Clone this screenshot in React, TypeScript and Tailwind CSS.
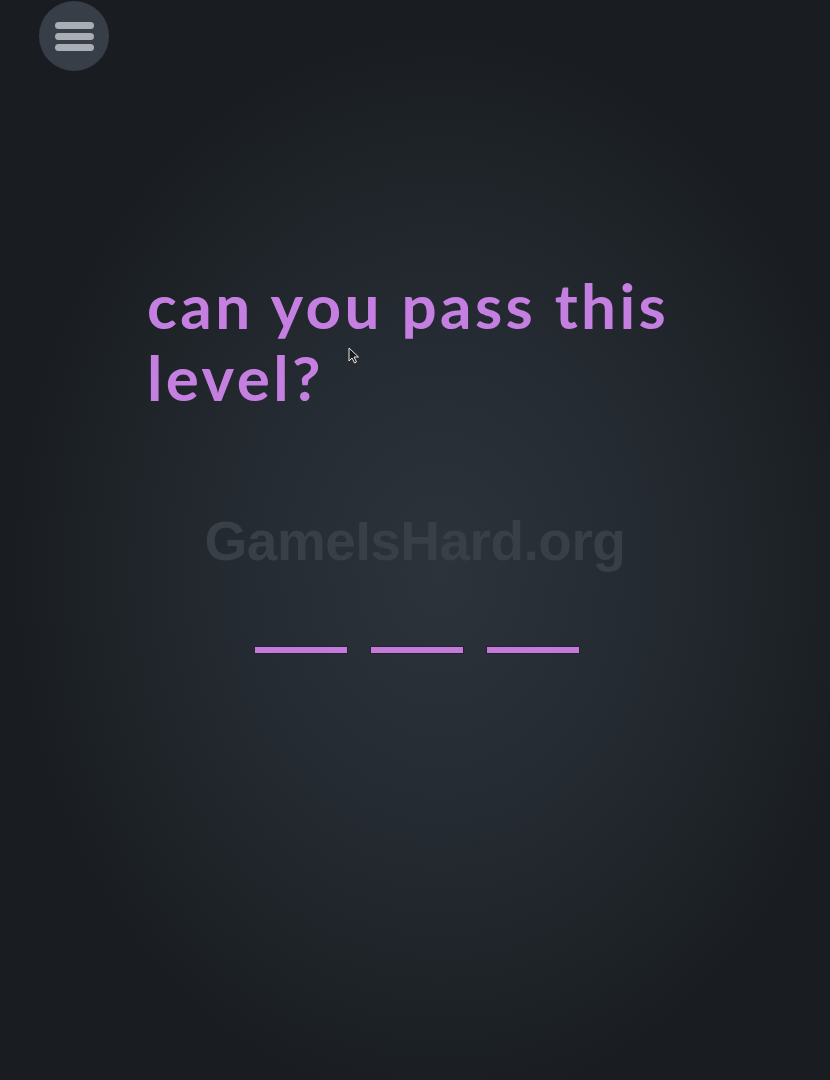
export default function App() {
  return (
    <div
      className="relative w-[830px] h-[1080px] overflow-hidden bg-[#1a1e22]"
      style={{
        backgroundImage:
          "radial-gradient(ellipse 430px 540px at 440px 570px, #2c333b 0%, #252b32 45%, #1e2328 78%, #191d21 100%)",
      }}
    >
      <div className="flex flex-col h-full">
        <div className="pl-[39px] pt-[1px]">
          <button className="w-[70px] h-[70px] rounded-full bg-[#383e47] flex flex-col items-center justify-center gap-[4px]">
            <span className="block w-[39px] h-[7px] rounded-full bg-[#a9adb4]" />
            <span className="block w-[39px] h-[7px] rounded-full bg-[#a9adb4]" />
            <span className="block w-[39px] h-[7px] rounded-full bg-[#a9adb4]" />
          </button>
        </div>

        <div className="w-[536px] mx-auto mt-[198px]">
          <h1
            className="text-[62px] leading-[72px] font-bold text-[#c57fe0] tracking-[3.4px]"
            style={{ fontFamily: "Lato, 'Noto Sans', sans-serif" }}
          >
            can you pass this level?
          </h1>
        </div>

        <div
          className="mt-[98px] text-center text-[55px] leading-[60px] font-bold text-[#393f46] tracking-[-0.5px]"
          style={{ fontFamily: "'Liberation Sans', Arial, sans-serif" }}
        >
          GameIsHard.org
        </div>

        <div className="mt-[75px] flex justify-center gap-[22px] pl-[4px]">
          <span className="block w-[94px] h-[8px] bg-[#c27bd8] border border-[#2a1f30]" />
          <span className="block w-[94px] h-[8px] bg-[#c27bd8] border border-[#2a1f30]" />
          <span className="block w-[94px] h-[8px] bg-[#c27bd8] border border-[#2a1f30]" />
        </div>
      </div>

      <svg
        className="absolute left-[348px] top-[347px]"
        width="12"
        height="17"
        viewBox="0 0 12 17"
        aria-hidden="true"
      >
        <path d="M1 1 L1 14 L4 11 L6.5 16 L8.5 15 L6 10 L10.5 10 Z" fill="#1a1a1a" stroke="#e8e8e8" strokeWidth="1" />
      </svg>
    </div>
  );
}
